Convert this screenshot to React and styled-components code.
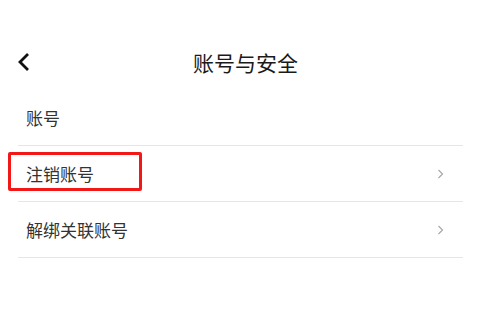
import styled, { createGlobalStyle } from "styled-components";

const Global = createGlobalStyle`
  html, body {
    margin: 0;
    padding: 0;
    background: #ffffff;
  }
  body {
    font-family: "Noto Sans CJK SC", "Noto Sans", sans-serif;
  }
`;

const Page = styled.div`
  width: 480px;
  height: 323px;
  background: #fff;
  overflow: hidden;
`;

const Header = styled.div`
  position: relative;
  height: 56px;
  margin-top: 34px;
  display: flex;
  align-items: center;
  justify-content: center;
`;

const BackButton = styled.div`
  position: absolute;
  left: 17px;
  top: 50%;
  transform: translateY(-50%);
  display: flex;
`;

const Title = styled.h1`
  margin: 0 0 0 11px;
  font-size: 21px;
  font-weight: 400;
  color: #1a1a1a;
`;

const List = styled.div`
  margin: 0 17px 0 18px;
`;

const Row = styled.div`
  position: relative;
  height: 55px;
  border-bottom: 1px solid #e6e6e6;
  display: flex;
  align-items: center;
  justify-content: space-between;
  padding: 0 19px 0 8px;
`;

const Label = styled.span`
  font-size: 17px;
  color: #333;
`;

const Highlight = styled.div`
  position: absolute;
  left: -10px;
  top: 6px;
  width: 128px;
  height: 33px;
  border: 3px solid #f21818;
  border-radius: 2px;
`;

const Back = () => (
  <svg width="14" height="22" viewBox="0 0 14 22">
    <polyline points="11,3 3,11 11,19" fill="none" stroke="#111" strokeWidth="2.8" />
  </svg>
);

const Arrow = () => (
  <svg width="7" height="10" viewBox="0 0 7 10">
    <polyline points="1.5,1 5.5,5 1.5,9" fill="none" stroke="#a8a8a8" strokeWidth="1.2" />
  </svg>
);

const items = [
  { label: "账号" },
  { label: "注销账号", arrow: true, marked: true },
  { label: "解绑关联账号", arrow: true },
];

export default function App() {
  return (
    <Page>
      <Global />
      <Header>
        <BackButton>
          <Back />
        </BackButton>
        <Title>账号与安全</Title>
      </Header>
      <List>
        {items.map((it) => (
          <Row key={it.label}>
            <Label>{it.label}</Label>
            {it.arrow && <Arrow />}
            {it.marked && <Highlight />}
          </Row>
        ))}
      </List>
    </Page>
  );
}
